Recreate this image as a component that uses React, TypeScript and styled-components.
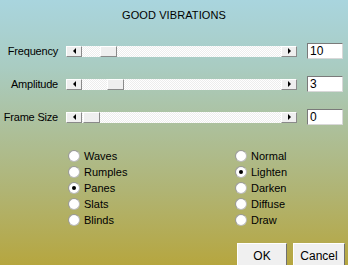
import React from 'react'
import styled, { createGlobalStyle } from 'styled-components'

const GlobalStyle = createGlobalStyle`
  html, body {
    margin: 0;
    padding: 0;
  }
  body {
    font-family: "Liberation Sans", Arial, sans-serif;
    font-size: 11px;
    color: #000;
  }
`

const Dialog = styled.div`
  width: 348px;
  height: 265px;
  overflow: hidden;
  box-sizing: border-box;
  background: linear-gradient(
    to bottom,
    #a9d5de 0%,
    #a9ccc2 25%,
    #adbf98 50%,
    #b0b474 72%,
    #b6a63f 100%
  );
  display: flex;
  flex-direction: column;
`

const Title = styled.div`
  height: 12px;
  line-height: 12px;
  margin-top: 9px;
  text-align: center;
  letter-spacing: 0.1px;
`

const Sliders = styled.div`
  display: flex;
  flex-direction: column;
  gap: 17px;
  margin-top: 22px;
`

const SliderRow = styled.div`
  display: flex;
  align-items: center;
  height: 16px;
`

const Label = styled.div`
  width: 58px;
  text-align: right;
  white-space: nowrap;
  letter-spacing: -0.2px;
`

const ScrollBar = styled.div`
  display: flex;
  width: 231px;
  height: 11px;
  margin-left: 8px;
  margin-right: 10px;
`

const ArrowButton = styled.div<{ $dir: 'left' | 'right' }>`
  width: 16px;
  height: 11px;
  box-sizing: border-box;
  background: #efefef;
  border-top: 1px solid #fff;
  border-left: 1px solid #fff;
  border-right: 1px solid #8a8a8a;
  border-bottom: 1px solid #8a8a8a;
  display: flex;
  align-items: center;
  justify-content: center;

  &::after {
    content: '';
    width: 0;
    height: 0;
    border-top: 3px solid transparent;
    border-bottom: 3px solid transparent;
    ${p => (p.$dir === 'left' ? 'border-right: 3px solid #000;' : 'border-left: 3px solid #000;')}
  }
`

const Track = styled.div`
  flex: 1;
  height: 11px;
  background-color: #fbfbfb;
  background-image: repeating-conic-gradient(#ededed 0 25%, #ffffff 0 50%);
  background-size: 2px 2px;
  display: flex;
`

const Thumb = styled.div`
  width: 17px;
  height: 11px;
  box-sizing: border-box;
  background: #efefef;
  border-top: 1px solid #fff;
  border-left: 1px solid #fff;
  border-right: 1px solid #8a8a8a;
  border-bottom: 1px solid #8a8a8a;
`

const ValueBox = styled.div`
  width: 36px;
  height: 16px;
  box-sizing: border-box;
  background: #fff;
  border-top: 1px solid #7a7a7a;
  border-left: 1px solid #7a7a7a;
  border-right: 1px solid #d8d8d8;
  border-bottom: 1px solid #d8d8d8;
  padding-left: 2px;
  line-height: 14px;
  font-size: 12px;
`

const Options = styled.div`
  display: flex;
  margin-top: 23px;
  padding-left: 68px;
`

const OptionColumn = styled.div<{ $width: number }>`
  display: flex;
  flex-direction: column;
  width: ${p => p.$width}px;
`

const OptionRow = styled.div`
  display: flex;
  align-items: center;
  height: 16px;
  gap: 4px;
`

const RadioCircle = styled.div<{ $checked: boolean }>`
  width: 12px;
  height: 12px;
  box-sizing: border-box;
  border-radius: 50%;
  background: radial-gradient(circle at 55% 55%, #ffffff 55%, #e4e4e4 100%);
  border: 1px solid #bdbdbd;
  border-top-color: #9a9a9a;
  border-left-color: #9a9a9a;
  display: flex;
  align-items: center;
  justify-content: center;

  &::after {
    content: '';
    width: 4px;
    height: 4px;
    border-radius: 50%;
    background: ${p => (p.$checked ? '#000' : 'transparent')};
  }
`

const Footer = styled.div`
  display: flex;
  justify-content: flex-end;
  gap: 6px;
  margin-top: 15px;
  padding-right: 3px;
`

const Button = styled.div<{ $width: number }>`
  width: ${p => p.$width}px;
  height: 24px;
  box-sizing: border-box;
  background: #f0f0f0;
  border-top: 1px solid #fff;
  border-left: 1px solid #fff;
  border-right: 1px solid #6f6f6f;
  border-bottom: 1px solid #6f6f6f;
  display: flex;
  justify-content: center;
  padding-top: 5px;
  font-size: 12px;
`

const sliders = [
  { label: 'Frequency', value: '10', thumb: 18 },
  { label: 'Amplitude', value: '3', thumb: 25 },
  { label: 'Frame Size', value: '0', thumb: 1 },
]

const effects = ['Waves', 'Rumples', 'Panes', 'Slats', 'Blinds']
const modes = ['Normal', 'Lighten', 'Darken', 'Diffuse', 'Draw']

export default function App() {
  return (
    <>
      <GlobalStyle />
      <Dialog>
        <Title>GOOD VIBRATIONS</Title>
        <Sliders>
          {sliders.map(s => (
            <SliderRow key={s.label}>
              <Label>{s.label}</Label>
              <ScrollBar>
                <ArrowButton $dir='left' />
                <Track>
                  <Thumb style={{ marginLeft: s.thumb }} />
                </Track>
                <ArrowButton $dir='right' />
              </ScrollBar>
              <ValueBox>{s.value}</ValueBox>
            </SliderRow>
          ))}
        </Sliders>
        <Options>
          <OptionColumn $width={167}>
            {effects.map(e => (
              <OptionRow key={e}>
                <RadioCircle $checked={e === 'Panes'} />
                {e}
              </OptionRow>
            ))}
          </OptionColumn>
          <OptionColumn $width={90}>
            {modes.map(m => (
              <OptionRow key={m}>
                <RadioCircle $checked={m === 'Lighten'} />
                {m}
              </OptionRow>
            ))}
          </OptionColumn>
        </Options>
        <Footer>
          <Button $width={50}>OK</Button>
          <Button $width={52}>Cancel</Button>
        </Footer>
      </Dialog>
    </>
  )
}
